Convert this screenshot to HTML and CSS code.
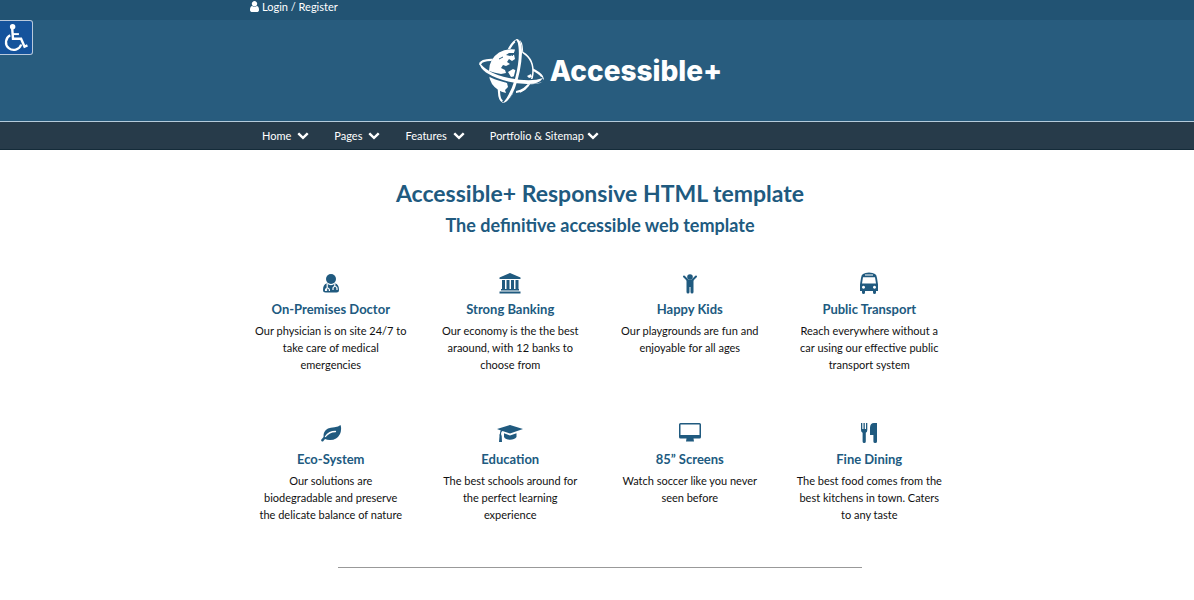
FILE: index.html
```html
<!DOCTYPE html>
<html lang="en">
<head>
<meta charset="utf-8">
<meta name="viewport" content="width=device-width, initial-scale=1">
<title>Accessible+ Responsive HTML template</title>
<link rel="stylesheet" href="styles.css">
</head>
<body>
<svg class="sprite" aria-hidden="true">
  <symbol id="chevron" viewBox="0 0 1792 1792"><path d="M1683 808l-742 741q-19 19-45 19t-45-19l-742-741q-19-19-19-45.500t19-45.500l166-165q19-19 45-19t45 19l531 531 531-531q19-19 45-19t45 19l166 165q19 19 19 45.500t-19 45.500z"/></symbol>
</svg>
<button class="access-toggle" type="button" aria-label="Accessibility options">
  <svg viewBox="0 0 34 34" fill="none" stroke="#fff" aria-hidden="true">
    <circle cx="13" cy="6" r="2.800" fill="#fff" stroke="none"/>
    <path d="M12.600 8l.8 10.300h8.300l3.600 8.200 3-1.300" stroke-width="2.500"/>
    <path d="M13 13.500h6.500" stroke-width="2"/>
    <path d="M10.500 14.700a8 8 0 1 0 11.300 9.500" stroke-width="2.300"/>
  </svg>
</button>
<div class="topbar">
  <div class="container">
    <a class="login" href="#"><svg viewBox="256 128 1280 1536" aria-hidden="true"><path d="M1536 1399q0 109-62.500 187t-150.500 78h-854q-88 0-150.500-78t-62.500-187q0-85 8.500-160.500t31.500-152 58.500-131 94-89 134.500-34.500q131 128 313 128t313-128q76 0 134.500 34.500t94 89 58.500 131 31.500 152 8.500 160.500zm-256-887q0 159-112.500 271.500t-271.500 112.500-271.500-112.500-112.500-271.500 112.500-271.500 271.500-112.500 271.500 112.500 112.500 271.500z"/></svg>Login / Register</a>
  </div>
</div>
<header class="masthead">
  <a class="logo" href="#">
    <svg viewBox="0 0 66 66" aria-hidden="true">
      <g fill="none" stroke="#fff">
        <ellipse cx="33.500" cy="33.500" rx="32" ry="9" transform="rotate(14 33.500 33.500)" stroke-width="2.200"/>
        <ellipse cx="32.500" cy="33" rx="31.500" ry="9" transform="rotate(-76 32.500 33)" stroke-width="2.200"/>
      </g>
      <circle cx="33" cy="33" r="22" fill="#285c7e"/>
      <path d="M42 13Q55 19 55 33Q55 47 42 54" fill="none" stroke="#fff" stroke-width="1.500"/>
      <path fill="#fff" d="M11 33Q11 21 21 14.500Q28 10.500 37 11.500L36 15L31 15L28 17L32 18L36 16.500L37 21L34 23L31 21L29 24L32 26L28 28L25 27L23 30L27 32L28 35L23 36Q17 35 11 33Z"/>
      <path fill="#fff" d="M11 36Q16 40 24 42L29 45L30 49L27 52L28 55Q19 53 14 46Q11 41 11 36ZM30 34L35 31L39 33L38 38L33 39ZM49 38l4-2 1 3-3 1ZM38 53Q47 51 51 44L53 44Q49 54 38 55Z"/>
      <path d="M37 14l-3 4M34 25l3 2M21 21l4-2" stroke="#285c7e"/>
      <path d="M1.500 27Q10 40 35 43Q57 45 65 41" fill="none" stroke="#285c7e" stroke-width="5"/>
      <path d="M39 2Q44 12 40 32Q35 54 26 65" fill="none" stroke="#285c7e" stroke-width="5"/>
      <path fill="#fff" d="M1.500 24Q8 35 31 40Q53 44.500 65 40Q61 46.500 49 46Q25 45 8 34.500Q1 29 1.500 24Z"/>
      <path fill="#fff" d="M38 1Q44 1 44 15Q43 34 37 50Q31 64 25 65Q32 57 37 41Q42 22 40.500 9Q40 4 38 1Z"/>
    </svg>
    <span>Accessible+</span>
  </a>
</header>
<nav class="mainnav" aria-label="Main">
  <ul class="container menu">
    <li><button type="button">Home<svg aria-hidden="true"><use href="#chevron"/></svg></button></li>
    <li><button type="button">Pages<svg aria-hidden="true"><use href="#chevron"/></svg></button></li>
    <li><button type="button">Features<svg aria-hidden="true"><use href="#chevron"/></svg></button></li>
    <li><button class="tight" type="button">Portfolio &amp; Sitemap<svg aria-hidden="true"><use href="#chevron"/></svg></button></li>
  </ul>
</nav>
<main class="content">
  <h1>Accessible+ Responsive HTML template</h1>
  <h2>The definitive accessible web template</h2>
  <div class="features">
    <section class="feature">
      <svg viewBox="0 0 28 24" aria-hidden="true"><circle cx="14" cy="8" r="5"/><path d="M10 12.500Q6 13 6 19Q6 21.500 8.500 21.500H19.500Q22 21.500 22 19Q22 13 18 12.500Q14 16 10 12.500Z"/><path d="M10.200 13v4M8.500 20q0-3 2-3t2 3M17.800 13v2.500M16 19v-1.500q0-2 2-2t2 2V19" fill="none" stroke="#fff" stroke-width="1.200"/><circle cx="9.300" cy="19" r="1" fill="#fff"/></svg>
      <h3>On-Premises Doctor</h3>
      <p>Our physician is on site 24/7 to<br>take care of medical<br>emergencies</p>
    </section>
    <section class="feature">
      <svg viewBox="0 0 28 24" aria-hidden="true"><path d="M14 2L24.500 6.500V8H3.500V6.500ZM6 9h3v9h1.500V9h3v9h1.500V9h3v9h1.500V9h3v9H23v1.500H5V18h1ZM3.500 20.500h21v2h-21Z"/></svg>
      <h3>Strong Banking</h3>
      <p>Our economy is the the best<br>araound, with 12 banks to<br>choose from</p>
    </section>
    <section class="feature">
      <svg viewBox="0 0 28 24" aria-hidden="true"><circle cx="14" cy="6" r="2.800"/><path d="M8 5.500l4 4h4l4-4" fill="none" stroke="currentColor" stroke-width="2" stroke-linecap="round"/><path d="M10.500 9h7v12q0 1.500-1.500 1.500t-1.500-1.500v-5h-1v5q0 1.500-1.500 1.500t-1.500-1.500Z"/></svg>
      <h3>Happy Kids</h3>
      <p>Our playgrounds are fun and<br>enjoyable for all ages</p>
    </section>
    <section class="feature">
      <svg viewBox="0 0 28 24" aria-hidden="true"><path fill-rule="evenodd" d="M8 3Q10 1.500 14 1.500T20 3Q21.500 3.500 22 7L23 13.500V20H21v1.500Q21 23 19.500 23T18 21.500V20H10v1.500Q10 23 8.500 23T7 21.500V20H5V13.500L6 7Q6.500 3.500 8 3ZM10 3.400v1.200h8V3.400ZM8 6.200L7 12.500H21L20 6.200ZM8.500 14.800a1.500 1.500 0 1 0 .01 0ZM19.500 14.800a1.500 1.500 0 1 0 .01 0Z"/></svg>
      <h3>Public Transport</h3>
      <p>Reach everywhere without a<br>car using our effective public<br>transport system</p>
    </section>
    <section class="feature">
      <svg viewBox="0 0 28 24" aria-hidden="true"><path d="M23.500 4Q25 8 23 13Q20 19 13 19Q10 19 8 18L6 20.500Q4.500 21 4 19L6.500 16Q6 10 11 7.500Q13.500 6.500 17.500 6.300Q21.500 6 23.500 4Z"/><path d="M8.500 15.500Q12 10.500 18.500 10.500" fill="none" stroke="#fff" stroke-width="1.300" stroke-linecap="round"/></svg>
      <h3>Eco-System</h3>
      <p>Our solutions are<br>biodegradable and preserve<br>the delicate balance of nature</p>
    </section>
    <section class="feature">
      <svg viewBox="0 0 28 24" aria-hidden="true"><path d="M14 4L27 8L14 12.500L6.500 10Q5 10.500 5 13L5.700 15L6 21H3L3.500 15Q3.200 13.500 4 12.500Q4 10.500 4.800 9.400L1 8Z"/><path d="M8 12.300L14 14.400L20.500 12.200V16Q18.500 18.800 14 18.800T8 16Z"/></svg>
      <h3>Education</h3>
      <p>The best schools around for<br>the perfect learning<br>experience</p>
    </section>
    <section class="feature">
      <svg viewBox="0 0 28 24" aria-hidden="true"><path fill-rule="evenodd" d="M4.500 2h19q1.500 0 1.500 1.500v12.500q0 1.500-1.500 1.500h-6l.5 3H10l.5-3h-6Q3 17.500 3 16V3.500Q3 2 4.500 2ZM4.500 3.500V14h19V3.500Z"/></svg>
      <h3>85” Screens</h3>
      <p>Watch soccer like you never<br>seen before</p>
    </section>
    <section class="feature">
      <svg viewBox="0 0 28 24" aria-hidden="true"><path d="M6 2h1.300v6h1.200V2h1.300v6H11V2h1.300v7Q12.300 11 10.800 11.800V20.500Q10.800 22 9.200 22T7.600 20.500V11.800Q6 11 6 9ZM22 2v18.500Q22 22 20.200 22T18.400 20.500V14H15V7Q15 2 19 2Z"/></svg>
      <h3>Fine Dining</h3>
      <p>The best food comes from the<br>best kitchens in town. Caters<br>to any taste</p>
    </section>
  </div>
  <hr>
</main>
</body>
</html>
```
FILE: styles.css
```css
* { box-sizing: border-box; }
body {
  margin: 0;
  background: #fff;
  color: #111;
  font: 11px/17px Lato, "Noto Sans", sans-serif;
}
h1, h2, h3, p, ul { margin: 0; padding: 0; }
a { color: inherit; text-decoration: none; }
button { font: inherit; color: inherit; background: none; border: 0; padding: 0; cursor: pointer; }
.sprite { display: none; }
.topbar, .masthead, .mainnav, .content { padding-left: 6px; }
.container { max-width: 700px; margin: 0 auto; }

.topbar { background: #225373; color: #fff; height: 20px; }
.container .login { display: flex; align-items: center; gap: 3px; height: 12px; }
.login svg { width: 9px; height: 11px; fill: #fff; }

.access-toggle {
  position: absolute;
  top: 20px;
  left: 0;
  width: 33px;
  height: 35px;
  background: #15539c;
  border: 1px solid #b9c9dc;
  border-left: 0;
  border-radius: 0 3px 3px 0;
}
.access-toggle svg { display: block; width: 33px; height: 33px; }

.masthead {
  display: flex;
  justify-content: center;
  align-items: center;
  height: 101px;
  background: #285c7e;
}
.logo {
  display: flex;
  align-items: center;
  gap: 6px;
  color: #fff;
  font-family: Inter, Lato, sans-serif;
  font-size: 28px;
  line-height: 36px;
  font-weight: 800;
}
.logo svg { width: 66px; height: 66px; }

.mainnav { background: #273b4a; border-top: 1px solid #b4cbdb; border-bottom: 1px solid #142b39; color: #fff; }
.menu { display: flex; gap: 25px; padding: 0 12px; list-style: none; }
.menu button { display: flex; align-items: center; gap: 6px; height: 27px; padding-bottom: 1px; }
.menu .tight { gap: 3px; }
.menu svg { width: 12px; height: 12px; fill: #fff; }

.content { padding-top: 27px; text-align: center; }
h1, h2, h3 { color: #205a7f; font-weight: 700; }
h1 { font-size: 23px; line-height: 32px; }
h2 { font-size: 18px; line-height: 32px; }
.features {
  display: grid;
  grid-template-columns: repeat(4, 1fr);
  max-width: 718px;
  margin: 30px auto 0;
}
.feature { height: 150px; padding: 0 10px; }
.feature svg { display: block; width: 28px; height: 24px; margin: 0 auto; fill: currentColor; color: #205a7f; }
h3 { font-size: 13px; line-height: 20px; margin: 4px 0 3px; }
hr { width: 524px; max-width: 90%; margin: -4px auto 0; border: 0; border-top: 1px solid #999; }
```
